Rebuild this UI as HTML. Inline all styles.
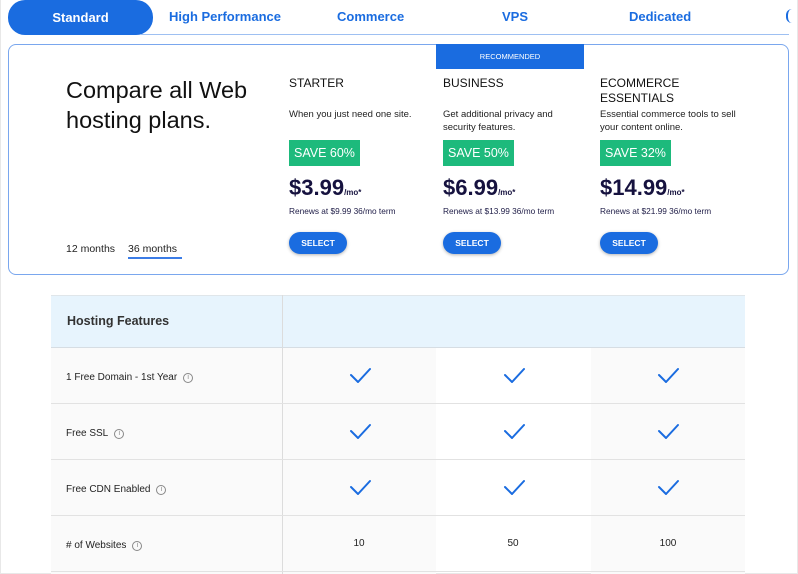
<!DOCTYPE html>
<html><head><meta charset="utf-8"><style>
*{margin:0;padding:0;box-sizing:border-box}
html,body{width:798px;height:574px;overflow:hidden}
body{background:#fff;font-family:"Liberation Sans",Arial,sans-serif;position:relative;color:#222}
.a{position:absolute}
.tab{position:absolute;top:9px;font-size:13px;font-weight:bold;color:#1a6ce0}
.plan{position:absolute;top:76px;font-size:12px;color:#111;line-height:15px}
.desc{position:absolute;top:109px;font-size:9.5px;color:#222;line-height:12.5px}
.save{position:absolute;top:140px;height:26px;background:#1dba7c;color:#fff;font-size:12.5px;line-height:26px;padding:0 5px}
.price{position:absolute;top:175px;font-size:22px;font-weight:bold;color:#16123f}
.price small{font-size:8px;font-weight:bold}
.ren{position:absolute;top:206px;font-size:8.3px;color:#22204a}
.btn{position:absolute;top:232px;width:58px;height:22px;border-radius:11px;background:#1a6ce0;color:#fff;font-size:8.5px;font-weight:bold;text-align:center;line-height:22px;box-shadow:0 1px 3px rgba(0,0,0,.3)}
.row{position:absolute;left:51px;width:694px;height:56px;border-top:1px solid #e2e2e2}
.lbl{position:absolute;left:15px;top:2px;height:56px;line-height:56px;font-size:10px;color:#222;display:flex;align-items:center}
.i{display:inline-block;width:10px;height:10px;border:1px solid #888;border-radius:50%;font-size:7px;line-height:8px;text-align:center;color:#888;margin-left:6px}
.num{position:absolute;top:0;line-height:56px;font-size:10px;width:154px;text-align:center;color:#222}
</style></head><body>
<div class="a" style="left:0;top:0;width:798px;height:574px;border:1px solid #e8e8e8;border-top:none"></div>
<div class="a" style="left:8px;top:0;width:145px;height:35px;background:#1a6ce0;border-radius:17px;color:#fff;font-weight:bold;font-size:13px;text-align:center;line-height:35px">Standard</div>
<div class="tab" style="left:169px">High Performance</div>
<div class="tab" style="left:337px">Commerce</div>
<div class="tab" style="left:502px">VPS</div>
<div class="tab" style="left:629px">Dedicated</div>
<div class="a" style="left:786px;top:9px;width:6px;height:14px;border-left:2px solid #1a6ce0;border-radius:7px 0 0 7px"></div>
<div class="a" style="left:140px;top:34px;width:649px;height:1px;background:#9ec0f2"></div>
<div class="a" style="left:8px;top:44px;width:781px;height:231px;border:1px solid #7aa7ee;border-radius:8px"></div>
<div class="a" style="left:436px;top:44px;width:148px;height:25px;background:#1a6ce0;color:#fff;font-size:7.5px;text-align:center;line-height:25px">RECOMMENDED</div>
<div class="a" style="left:66px;top:75px;font-size:23.5px;line-height:30px;color:#111">Compare all Web<br>hosting plans.</div>
<div class="a" style="left:66px;top:243px;font-size:10.5px;color:#222">12 months</div>
<div class="a" style="left:128px;top:243px;font-size:10.5px;color:#222">36 months</div>
<div class="a" style="left:128px;top:257px;width:54px;height:2px;background:#3b7ce6"></div>

<div class="plan" style="left:289px">STARTER</div>
<div class="desc" style="left:289px">When you just need one site.</div>
<div class="save" style="left:289px">SAVE 60%</div>
<div class="price" style="left:289px">$3.99<small>/mo*</small></div>
<div class="ren" style="left:289px">Renews at $9.99 36/mo term</div>
<div class="btn" style="left:289px">SELECT</div>

<div class="plan" style="left:443px">BUSINESS</div>
<div class="desc" style="left:443px">Get additional privacy and<br>security features.</div>
<div class="save" style="left:443px">SAVE 50%</div>
<div class="price" style="left:443px">$6.99<small>/mo*</small></div>
<div class="ren" style="left:443px">Renews at $13.99 36/mo term</div>
<div class="btn" style="left:443px">SELECT</div>

<div class="plan" style="left:600px">ECOMMERCE<br>ESSENTIALS</div>
<div class="desc" style="left:600px">Essential commerce tools to sell<br>your content online.</div>
<div class="save" style="left:600px">SAVE 32%</div>
<div class="price" style="left:600px">$14.99<small>/mo*</small></div>
<div class="ren" style="left:600px">Renews at $21.99 36/mo term</div>
<div class="btn" style="left:600px">SELECT</div>

<div class="a" style="left:51px;top:295px;width:694px;height:52px;background:#e7f4fd;border-top:1px solid #e0e6ea"></div>
<div class="a" style="left:67px;top:314px;font-size:12.5px;font-weight:bold;color:#333">Hosting Features</div>
<div class="a" style="left:51px;top:347px;width:385px;height:227px;background:#fafafa"></div>
<div class="a" style="left:591px;top:347px;width:154px;height:227px;background:#fafafa"></div>
<div class="a" style="left:282px;top:295px;width:1px;height:279px;background:#dcdcdc"></div>

<div class="row" style="top:347px;border-top-color:#d6dde3"><div class="lbl">1 Free Domain - 1st Year<span class="i">i</span></div></div>
<div class="row" style="top:403px"><div class="lbl">Free SSL<span class="i">i</span></div></div>
<div class="row" style="top:459px"><div class="lbl">Free CDN Enabled<span class="i">i</span></div></div>
<div class="row" style="top:515px"><div class="lbl"># of Websites<span class="i">i</span></div>
<div class="num" style="left:231px">10</div><div class="num" style="left:385px">50</div><div class="num" style="left:540px">100</div></div>
<div class="a" style="left:51px;top:571px;width:694px;height:3px;border-top:1px solid #e2e2e2"></div>

<svg class="a" style="left:0;top:0" width="798" height="574">
<g fill="none" stroke="#1a6ce0" stroke-width="2" stroke-linecap="round" stroke-linejoin="round">
<path d="M351 375l7 7 12-13"/><path d="M505 375l7 7 12-13"/><path d="M659 375l7 7 12-13"/>
<path d="M351 431l7 7 12-13"/><path d="M505 431l7 7 12-13"/><path d="M659 431l7 7 12-13"/>
<path d="M351 487l7 7 12-13"/><path d="M505 487l7 7 12-13"/><path d="M659 487l7 7 12-13"/>
</g></svg>
</body></html>
